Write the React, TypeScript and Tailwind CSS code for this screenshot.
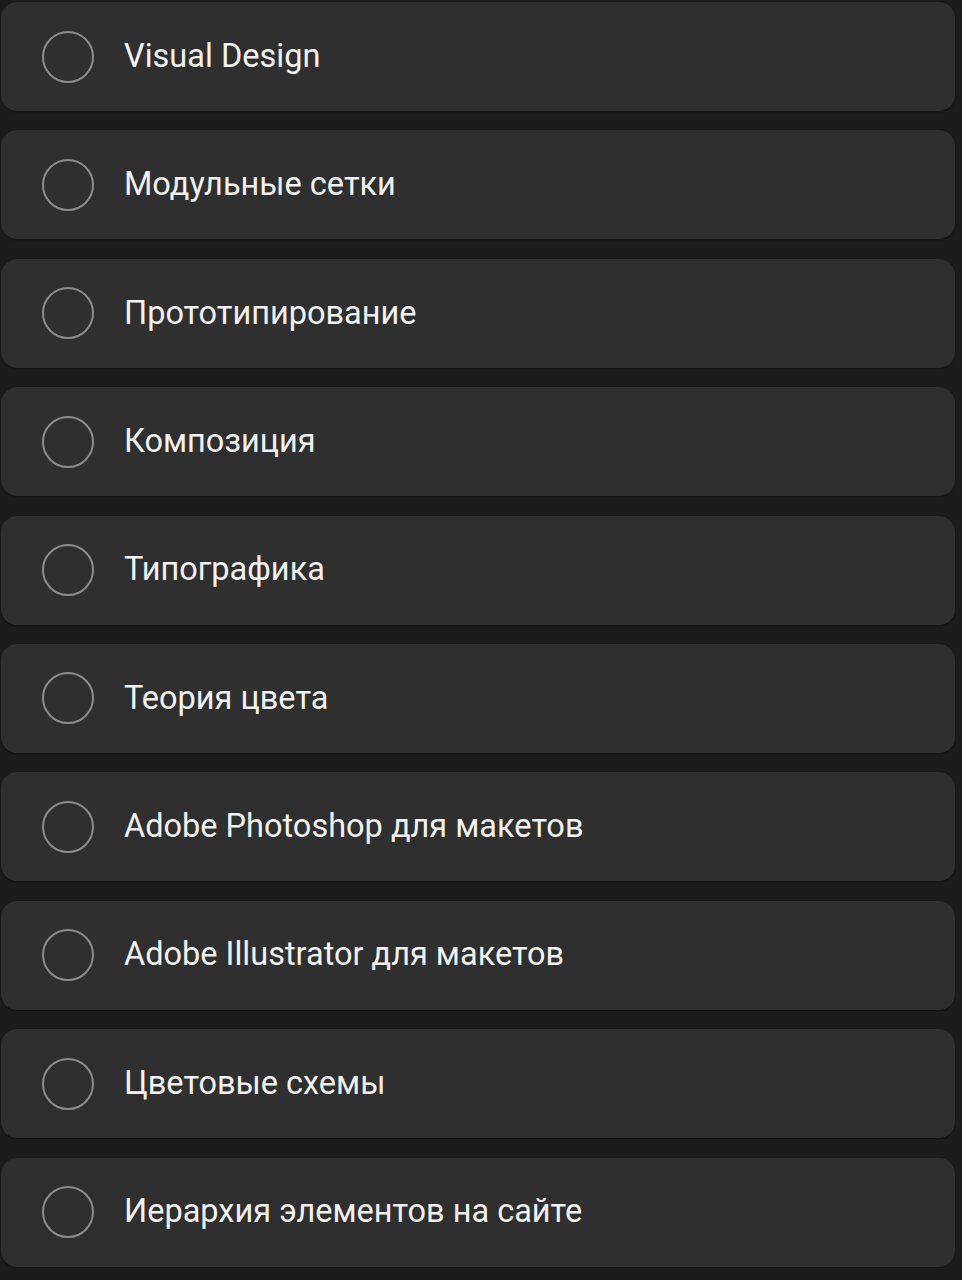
import React from "react";

const items = [
  "Visual Design",
  "Модульные сетки",
  "Прототипирование",
  "Композиция",
  "Типографика",
  "Теория цвета",
  "Adobe Photoshop для макетов",
  "Adobe Illustrator для макетов",
  "Цветовые схемы",
  "Иерархия элементов на сайте",
];

const App = () => {
  return (
    <div className="bg-[#1c1c1c] w-[962px] h-[1280px] overflow-hidden pt-[2px] pl-[1px] pr-[7px] font-['Roboto',sans-serif]">
      <div className="flex flex-col gap-[19.4px]">
        {items.map((item) => (
          <div
            key={item}
            className="h-[109px] bg-[#2f2f2f] rounded-[16px] flex items-center shadow-[0_1px_2px_rgba(0,0,0,0.4)]"
          >
            <div className="ml-[41px] w-[52px] h-[52px] rounded-full border-2 border-[#8c8c8c] shrink-0"></div>
            <span className="ml-[30px] -mt-[1px] text-[32.5px] leading-none text-[#f2f2f2]">{item}</span>
          </div>
        ))}
      </div>
    </div>
  );
};

export default App;
